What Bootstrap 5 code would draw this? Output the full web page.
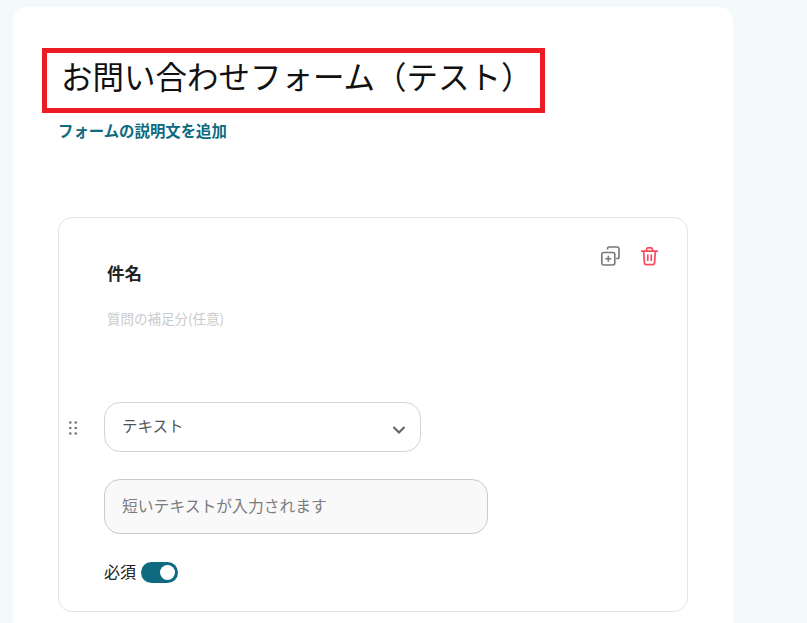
<!DOCTYPE html>
<html lang="ja">
<head>
<meta charset="utf-8">
<title>お問い合わせフォーム</title>
<link href="https://cdn.jsdelivr.net/npm/bootstrap@5.3.0/dist/css/bootstrap.min.css" rel="stylesheet">
<style>
html,body{height:100%;overflow:hidden}
body{background:#f2fbf9;font-family:"Noto Sans CJK JP","Noto Sans",sans-serif;color:#222}
.sheet{width:720px;height:640px;margin:7px 0 0 13px;padding:41px 45px 0 29px;background:#fff;border-radius:14px}
.title-box{width:503px;height:65px;border:5px solid #ed1c24;padding:0 0 0 14px;font-size:31.5px;line-height:45px;color:#111;font-weight:400;margin:0;white-space:nowrap}
.desc-link{display:block;margin:7px 0 0 16px;font-size:15.4px;line-height:20px;font-weight:700;color:#0d6a80;text-decoration:none;white-space:nowrap}
.q-card{margin:77px 0 0 16px;width:630px;height:395px;border:1px solid #e2e4e6;border-radius:14px;padding:43px 0 0 45px;position:relative}
.q-name{font-size:17.5px;line-height:24px;font-weight:700;color:#222;margin:0 0 0 3px}
.q-help{font-size:13.5px;line-height:20px;color:#c9cbcd;margin:23px 0 0 3px}
.tools{position:absolute;top:28px;right:28px;gap:20px}
.grip{position:absolute;left:10px;top:203px}
.type-select{width:317px;height:50px;margin:74px 0 0 0;padding:0 44px 0 17px;border:1px solid #ced4da;border-radius:16px;font-size:15.5px;line-height:44px;color:#555;background:#fff url("data:image/svg+xml,%3Csvg xmlns='http://www.w3.org/2000/svg' viewBox='0 0 14 10'%3E%3Cpath d='M1.5 2 7 7.5 12.5 2' fill='none' stroke='%23666' stroke-width='2.2'/%3E%3C/svg%3E") no-repeat right 14px top 22px/14px 10px}
.short-input{width:384px;height:55px;margin-top:27px;padding:0 17px 3px;border:1px solid #c8cacc;border-radius:16px;background:#f9f9f9;font-size:15.8px;color:#777;box-shadow:none}
.short-input::placeholder{color:#7c7c7c;opacity:1}
.req-row{margin-top:14px;gap:5px;font-size:16px;line-height:50px;height:50px;color:#222}
.req-text{position:relative;top:-2px}
.switch-pill{width:37px;height:21px;border-radius:11px;background:#0d6a80;padding:3px;justify-content:flex-end;margin-top:-1px}
.switch-knob{width:15px;height:15px;border-radius:50%;background:#fff}
</style>
</head>
<body>
<main class="sheet">
  <h1 class="title-box">お問い合わせフォーム（テスト）</h1>
  <a class="desc-link" href="#">フォームの説明文を追加</a>
  <section class="q-card">
    <div class="tools d-flex align-items-center">
      <svg width="20" height="20" viewBox="0 0 20 20" fill="none" stroke="#777" stroke-width="1.6" aria-label="複製"><path d="M7.5 3.5V2.8A1.8 1.8 0 0 1 9.3 1h7.9A1.8 1.8 0 0 1 19 2.8v7.9a1.8 1.8 0 0 1-1.8 1.8h-1"/><rect x="1.8" y="6.5" width="13" height="12.5" rx="2"/><path d="M8.3 9.8v6M5.3 12.8h6"/></svg>
      <svg width="19" height="20" viewBox="0 0 20 20" fill="none" stroke="#fb4a5e" stroke-width="1.8" stroke-linecap="round" stroke-linejoin="round" aria-label="削除"><path d="M1.8 4.800h16.400M6.500 4.500l.8-2.500a1 1 0 0 1 1-.6h3.400a1 1 0 0 1 1 .6l.8 2.500M3.800 5l.9 12.200A1.800 1.800 0 0 0 6.500 19h7a1.800 1.800 0 0 0 1.800-1.800L16.200 5M8.200 9v5.500M11.800 9v5.500"/></svg>
    </div>
    <svg class="grip" width="8" height="14" viewBox="0 0 8 14" fill="#777" aria-hidden="true"><circle cx="1.3" cy="1.5" r="1.3"/><circle cx="6.7" cy="1.5" r="1.3"/><circle cx="1.3" cy="7" r="1.3"/><circle cx="6.7" cy="7" r="1.3"/><circle cx="1.3" cy="12.5" r="1.3"/><circle cx="6.7" cy="12.5" r="1.3"/></svg>
    <p class="q-name">件名</p>
    <p class="q-help">質問の補足分(任意)</p>
    <div class="type-select">テキスト</div>
    <input class="form-control short-input" type="text" placeholder="短いテキストが入力されます">
    <div class="req-row d-flex align-items-center">
      <span class="req-text">必須</span>
      <div class="switch-pill d-flex align-items-center"><div class="switch-knob"></div></div>
    </div>
  </section>
</main>
</body>
</html>
